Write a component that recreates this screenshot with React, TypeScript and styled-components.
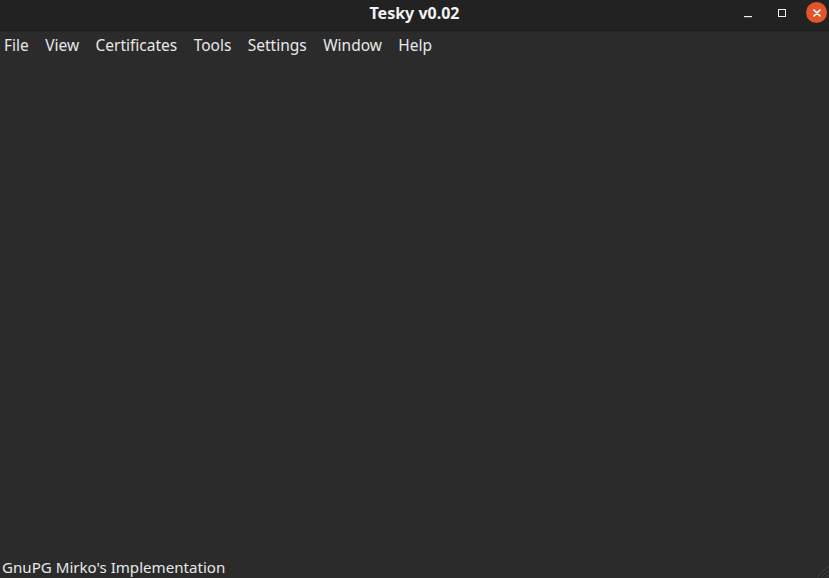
import React from "react";
import styled, { createGlobalStyle } from "styled-components";

const Global = createGlobalStyle`
  html, body { margin: 0; padding: 0; background: #2b2b2b; }
  body { font-family: "Noto Sans", "Open Sans", sans-serif; }
  #root { height: 578px; }
`;

const Window = styled.div`
  width: 829px;
  height: 578px;
  display: flex;
  flex-direction: column;
  background: #2b2b2b;
  color: #e6e6e6;
  overflow: hidden;
  position: relative;
`;

const TitleBar = styled.div`
  height: 31px;
  flex: none;
  background: #222222;
  border-bottom: 1px solid #1a1a1a;
  box-sizing: border-box;
  display: grid;
  grid-template-columns: 1fr auto 1fr;
  align-items: center;
`;

const Title = styled.div`
  grid-column: 2;
  font-weight: 700;
  font-size: 16px;
  color: #f2f2f2;
  padding-bottom: 4px;
`;

const Controls = styled.div`
  grid-column: 3;
  justify-self: end;
  display: flex;
  align-items: center;
  padding-right: 2px;
  padding-bottom: 5px;
`;

const CtrlButton = styled.div<{ $close?: boolean }>`
  width: ${(p) => (p.$close ? 21 : 34)}px;
  height: 21px;
  display: flex;
  align-items: center;
  justify-content: center;
  border-radius: ${(p) => (p.$close ? "50%" : "0")};
  background: ${(p) => (p.$close ? "#e0552a" : "transparent")};
  margin-left: ${(p) => (p.$close ? 7 : 0)}px;
`;

const MenuBar = styled.div`
  height: 29px;
  flex: none;
  display: flex;
  align-items: center;
  padding-left: 4px;
  gap: 16.4px;
  font-size: 15.5px;
  color: #e8e8e8;
`;

const MenuItem = styled.span`
  line-height: 29px;
`;

const Content = styled.div`
  flex: 1;
`;

const StatusBar = styled.div`
  height: 22px;
  flex: none;
  display: flex;
  align-items: center;
  padding-left: 2px;
  font-size: 15.1px;
  color: #e8e8e8;
`;

const Grip = styled.svg`
  position: absolute;
  right: 0;
  bottom: 0;
`;

export default function App() {
  const menus = ["File", "View", "Certificates", "Tools", "Settings", "Window", "Help"];
  return (
    <>
      <Global />
      <Window>
        <TitleBar>
          <Title>Tesky v0.02</Title>
          <Controls>
            <CtrlButton>
              <svg width="10" height="10" viewBox="0 0 10 10">
                <rect x="1" y="8" width="8" height="1.2" fill="#f0f0f0" />
              </svg>
            </CtrlButton>
            <CtrlButton>
              <svg width="10" height="10" viewBox="0 0 10 10">
                <rect x="1.5" y="1.5" width="7" height="7" fill="none" stroke="#f0f0f0" strokeWidth="1" />
              </svg>
            </CtrlButton>
            <CtrlButton $close>
              <svg width="10" height="10" viewBox="0 0 10 10">
                <path d="M2 2 L8 8 M8 2 L2 8" stroke="#ffffff" strokeWidth="1.7" strokeLinecap="round" />
              </svg>
            </CtrlButton>
          </Controls>
        </TitleBar>
        <MenuBar>
          {menus.map((m) => (
            <MenuItem key={m}>{m}</MenuItem>
          ))}
        </MenuBar>
        <Content />
        <StatusBar>GnuPG Mirko's Implementation</StatusBar>
        <Grip width="14" height="14" viewBox="0 0 14 14">
          <path d="M13 3 L3 13 M13 7 L7 13 M13 11 L11 13" stroke="#3d3d3d" strokeWidth="1.5" />
          <path d="M13 4 L4 13 M13 8 L8 13" stroke="#1e1e1e" strokeWidth="1" />
        </Grip>
      </Window>
    </>
  );
}
